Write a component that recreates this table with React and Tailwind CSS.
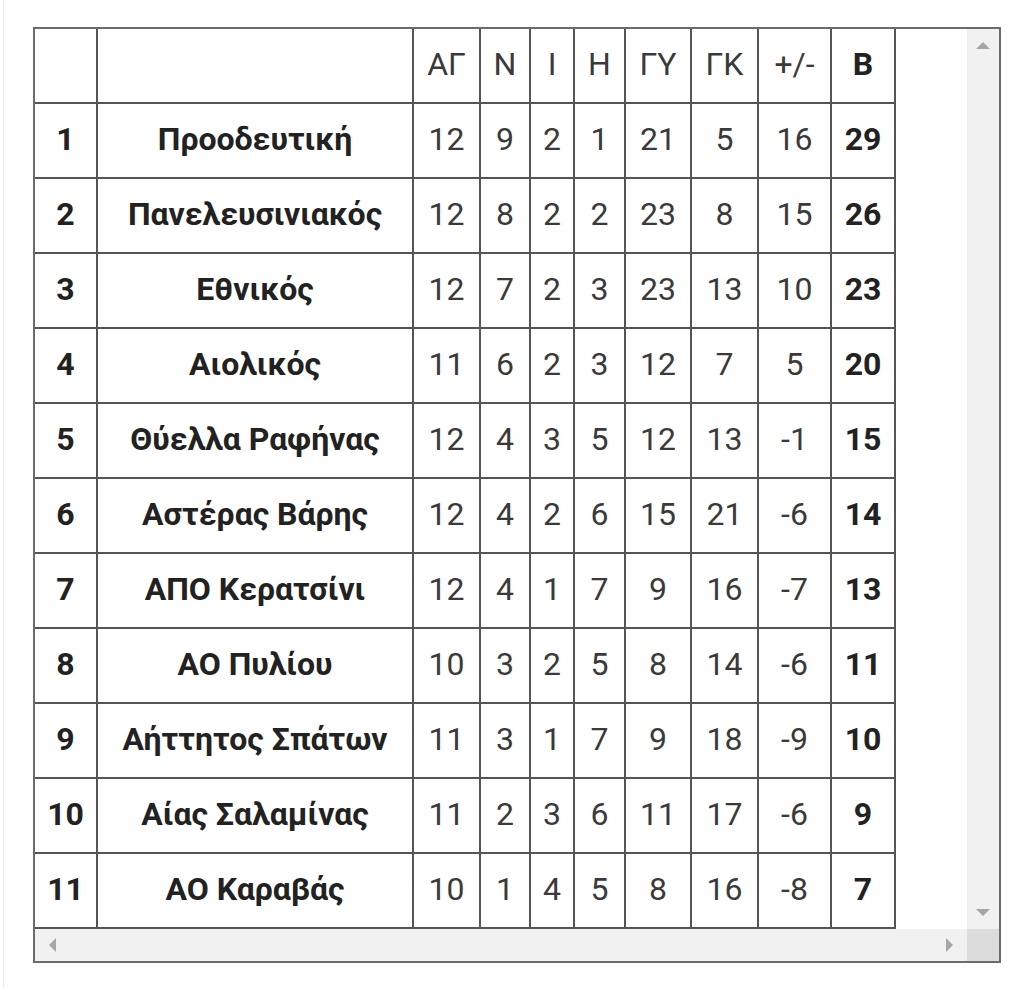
import React from "react";

const headers = ["", "", "ΑΓ", "Ν", "Ι", "Η", "ΓΥ", "ΓΚ", "+/-", "Β"];

const rows = [
  [1, "Προοδευτική", 12, 9, 2, 1, 21, 5, 16, 29],
  [2, "Πανελευσινιακός", 12, 8, 2, 2, 23, 8, 15, 26],
  [3, "Εθνικός", 12, 7, 2, 3, 23, 13, 10, 23],
  [4, "Αιολικός", 11, 6, 2, 3, 12, 7, 5, 20],
  [5, "Θύελλα Ραφήνας", 12, 4, 3, 5, 12, 13, -1, 15],
  [6, "Αστέρας Βάρης", 12, 4, 2, 6, 15, 21, -6, 14],
  [7, "ΑΠΟ Κερατσίνι", 12, 4, 1, 7, 9, 16, -7, 13],
  [8, "ΑΟ Πυλίου", 10, 3, 2, 5, 8, 14, -6, 11],
  [9, "Αήττητος Σπάτων", 11, 3, 1, 7, 9, 18, -9, 10],
  [10, "Αίας Σαλαμίνας", 11, 2, 3, 6, 11, 17, -6, 9],
  [11, "ΑΟ Καραβάς", 10, 1, 4, 5, 8, 16, -8, 7],
];

// widths include the 2px right border of each cell
const colWidths = [
  "w-[63px]",
  "w-[316px]",
  "w-[67px]",
  "w-[50px]",
  "w-[44px]",
  "w-[51px]",
  "w-[66px]",
  "w-[67px]",
  "w-[73px]",
  "w-[64px]",
];

function Cell({ col, bold, children }) {
  return (
    <div
      className={`${colWidths[col]} h-[75px] shrink-0 flex items-center justify-center pb-[3px] border-r-2 border-b-2 border-[#555] ${
        bold ? "font-bold text-[#222]" : "font-normal text-[#3a3a3a]"
      }`}
    >
      {children}
    </div>
  );
}

export default function App() {
  return (
    <div className="w-[1024px] h-[988px] bg-white">
      <div className="ml-[3px] h-full border-l border-[#e8e8e8] pt-[27px] pl-[29px]">
        <div
          className="w-[968px] h-[936px] border-2 border-[#6b6b6b] flex flex-col text-[32px]"
          style={{ fontFamily: "Roboto, 'Liberation Sans', sans-serif" }}
        >
          <div className="flex h-[900px]">
            <div className="w-[932px] bg-white">
              <div className="flex">
                {headers.map((h, i) => (
                  <Cell key={i} col={i} bold={i === 9}>
                    {h}
                  </Cell>
                ))}
              </div>
              {rows.map((row) => (
                <div key={row[0]} className="flex">
                  {row.map((v, i) => (
                    <Cell key={i} col={i} bold={i === 0 || i === 1 || i === 9}>
                      {v}
                    </Cell>
                  ))}
                </div>
              ))}
            </div>
            <div className="w-[32px] bg-[#f1f1f1] flex flex-col items-center justify-between py-[13px]">
              <div className="w-0 h-0 border-l-[7px] border-r-[7px] border-b-[7px] border-l-transparent border-r-transparent border-b-[#a6a6a6]" />
              <div className="w-0 h-0 border-l-[7px] border-r-[7px] border-t-[7px] border-l-transparent border-r-transparent border-t-[#a6a6a6]" />
            </div>
          </div>
          <div className="flex h-[32px]">
            <div className="w-[932px] bg-[#f1f1f1] flex items-center justify-between px-[14px]">
              <div className="w-0 h-0 border-t-[7px] border-b-[7px] border-r-[7px] border-t-transparent border-b-transparent border-r-[#a6a6a6]" />
              <div className="w-0 h-0 border-t-[7px] border-b-[7px] border-l-[7px] border-t-transparent border-b-transparent border-l-[#a6a6a6]" />
            </div>
            <div className="w-[32px] bg-[#dcdcdc]" />
          </div>
        </div>
      </div>
    </div>
  );
}
